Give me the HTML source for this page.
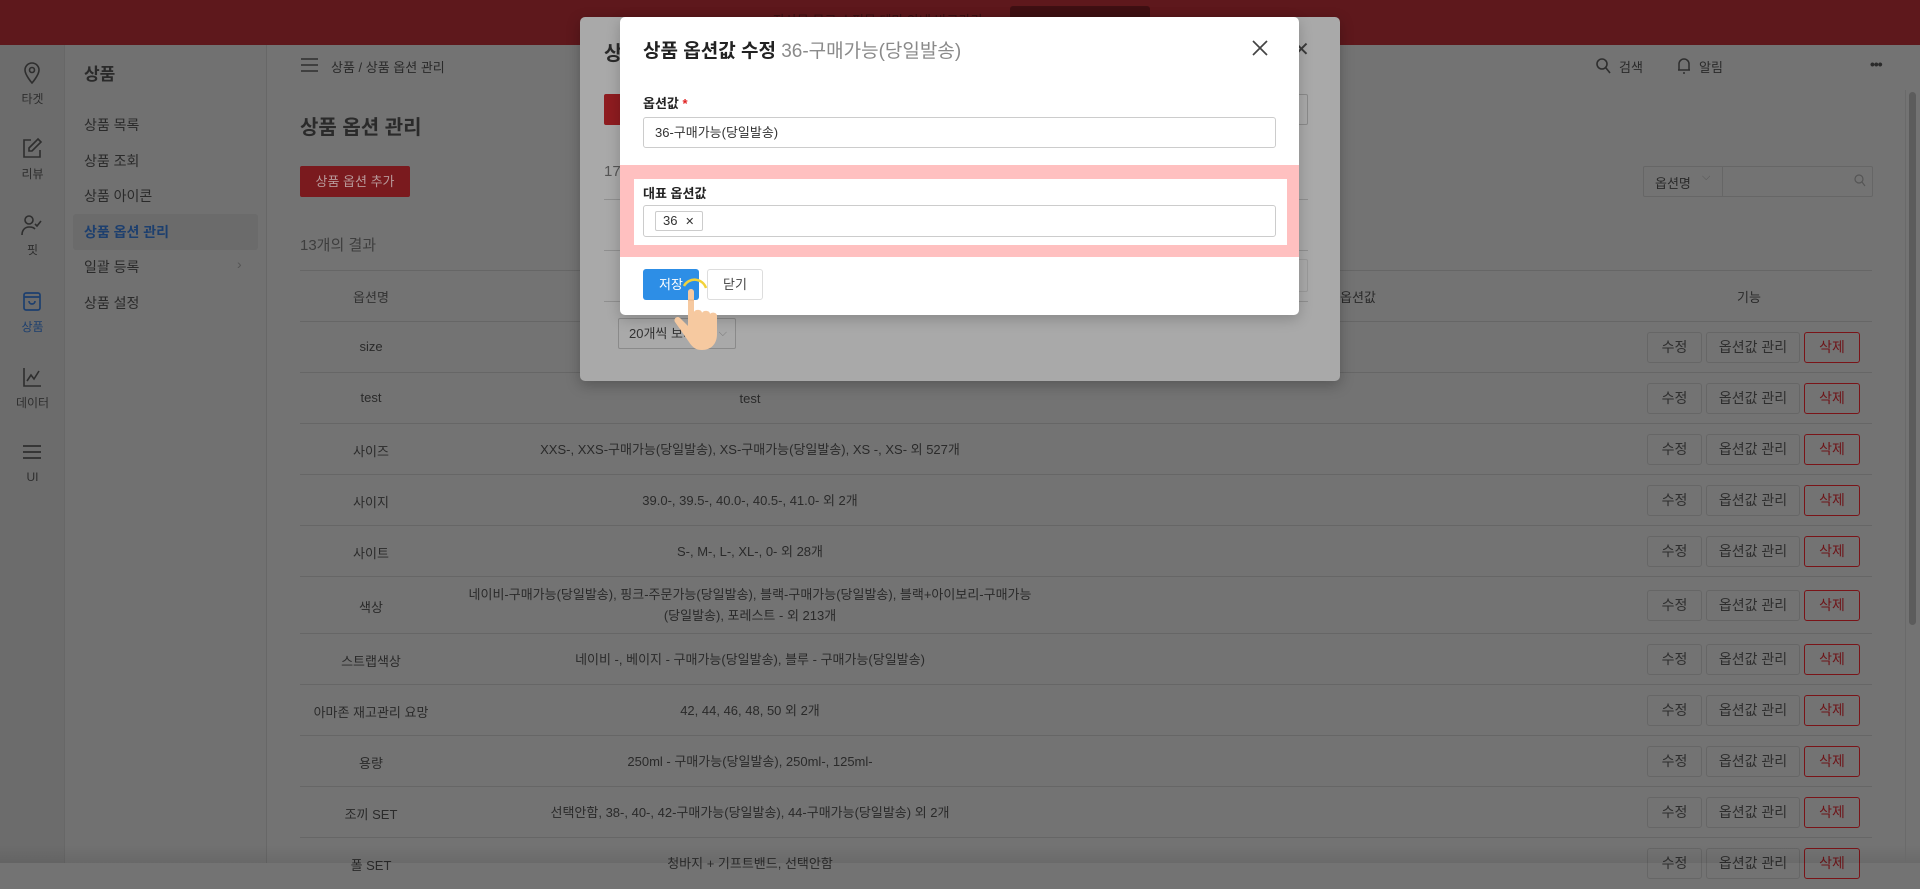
<!DOCTYPE html>
<html><head><meta charset="utf-8"><style>
*{box-sizing:border-box;margin:0;padding:0}
body{width:1920px;height:863px;overflow:hidden;position:relative;background:#737373;font-family:"Liberation Sans","Noto Sans CJK KR",sans-serif;color:#2a2a2a}
.a{position:absolute}
.hdr{left:0;top:0;width:1920px;height:45px;background:#5e181c}
.isb{left:0;top:45px;width:65px;height:818px;background:#6c6c6c;border-right:1px solid #676767}
.sub{left:65px;top:45px;width:202px;height:818px;background:#717171;border-right:1px solid #676767}
.ic{width:65px;text-align:center;font-size:12px;color:#2e2e2e}
.mi{left:84px;font-size:14px;color:#2a2a2a}
.row{left:300px;width:1572px;border-bottom:1px solid #666}
.c1{position:absolute;left:0;width:142px;text-align:center;font-size:13px;white-space:nowrap}
.c2{position:absolute;left:50px;width:800px;text-align:center;font-size:13px;line-height:21px;white-space:nowrap}
.b{position:absolute;height:31px;border:1px solid #666;border-radius:3px;font-size:14px;text-align:center;line-height:29px;color:#2e2e2e;background:#737373}
.b1{left:1347px;width:55px}.b2{left:1406px;width:94px}.b3{left:1504px;width:56px;border-color:#7a1418;color:#6e1418}
</style></head><body>
<div class="a hdr"></div>
<div class="a" style="left:773px;top:10px;font-size:13px;color:#3a1013">자사몰 무료 쇼핑몰 테마 안내 바로가기</div>
<div class="a" style="left:1010px;top:6px;width:140px;height:24px;background:#3f1013;border-radius:3px"></div>

<div class="a isb"></div>
<div class="a sub"></div>
<svg class="a" style="left:22px;top:62px" width="20" height="22" viewBox="0 0 20 22" fill="none" stroke="#2e2e2e" stroke-width="1.6"><path d="M10 21C10 21 3 13 3 8a7 7 0 0114 0c0 5-7 13-7 13z"/><circle cx="10" cy="8" r="2.5"/></svg>
<div class="a ic" style="top:90px">타겟</div>
<svg class="a" style="left:21px;top:137px" width="22" height="22" viewBox="0 0 22 22" fill="none" stroke="#2e2e2e" stroke-width="1.6"><path d="M10 3H3v17h16v-7"/><path d="M17 2l3 3-9 9H8v-3z"/></svg>
<div class="a ic" style="top:165px">리뷰</div>
<svg class="a" style="left:20px;top:214px" width="24" height="22" viewBox="0 0 24 22" fill="none" stroke="#2e2e2e" stroke-width="1.6"><circle cx="9" cy="6" r="4"/><path d="M2 21c0-5 3-8 7-8s5 1 6 2"/><path d="M15 10l2 2 4-5"/></svg>
<div class="a ic" style="top:241px">핏</div>
<svg class="a" style="left:21px;top:290px" width="22" height="22" viewBox="0 0 22 22" fill="none" stroke="#1d3f6e" stroke-width="1.7"><rect x="3" y="3" width="16" height="17" rx="2"/><path d="M3 7h16M8 11c0 4 6 4 6 0"/></svg>
<div class="a ic" style="top:318px;color:#1d3f6e">상품</div>
<svg class="a" style="left:21px;top:366px" width="22" height="22" viewBox="0 0 22 22" fill="none" stroke="#2e2e2e" stroke-width="1.6"><path d="M3 2v18h17"/><path d="M6 15l4-6 3 4 5-8"/></svg>
<div class="a ic" style="top:394px">데이터</div>
<svg class="a" style="left:21px;top:443px" width="22" height="18" viewBox="0 0 22 18" fill="none" stroke="#2e2e2e" stroke-width="1.8"><path d="M2 3h18M2 9h18M2 15h18"/></svg>
<div class="a ic" style="top:470px">UI</div>

<div class="a" style="left:84px;top:60px;font-size:17px;font-weight:bold">상품</div>
<div class="a mi" style="top:115px">상품 목록</div>
<div class="a mi" style="top:151px">상품 조회</div>
<div class="a mi" style="top:186px">상품 아이콘</div>
<div class="a" style="left:73px;top:214px;width:185px;height:36px;background:#6b6b6b;border-radius:3px"></div>
<div class="a mi" style="top:222px;color:#1d3f6e;font-weight:bold">상품 옵션 관리</div>
<div class="a mi" style="top:257px">일괄 등록</div>
<div class="a" style="left:237px;top:256px;font-size:14px;color:#555">›</div>
<div class="a mi" style="top:293px">상품 설정</div>

<svg class="a" style="left:301px;top:58px" width="17" height="14" viewBox="0 0 17 14" stroke="#2e2e2e" stroke-width="1.6"><path d="M0 1h17M0 7h17M0 13h17"/></svg>
<div class="a" style="left:331px;top:57px;font-size:13px">상품 / 상품 옵션 관리</div>
<svg class="a" style="left:1596px;top:58px" width="15" height="16" viewBox="0 0 15 16" fill="none" stroke="#2e2e2e" stroke-width="1.6"><circle cx="6" cy="6" r="5"/><path d="M10 10l4 5"/></svg>
<div class="a" style="left:1619px;top:57px;font-size:13px">검색</div>
<svg class="a" style="left:1677px;top:57px" width="14" height="17" viewBox="0 0 14 17" fill="none" stroke="#2e2e2e" stroke-width="1.5"><path d="M2 13V7a5 5 0 0110 0v6H1h12M6 16h2"/></svg>
<div class="a" style="left:1699px;top:57px;font-size:13px">알림</div>
<div class="a" style="left:1870px;top:56px;font-size:14px;font-weight:bold;letter-spacing:-1px">•••</div>

<div class="a" style="left:300px;top:111px;font-size:20px;font-weight:bold">상품 옵션 관리</div>
<div class="a" style="left:300px;top:166px;width:110px;height:31px;background:#7a1a1e;border-radius:2px;color:#b89a9b;font-size:13px;text-align:center;line-height:31px">상품 옵션 추가</div>
<div class="a" style="left:300px;top:234px;font-size:15px;color:#3e3e3e">13개의 결과</div>
<div class="a" style="left:1643px;top:166px;width:230px;height:31px;border:1px solid #666;border-radius:2px"></div>
<div class="a" style="left:1722px;top:166px;width:1px;height:31px;background:#666"></div>
<div class="a" style="left:1655px;top:173px;font-size:13px">옵션명</div>
<div class="a" style="left:1702px;top:171px;font-size:11px;color:#555">⌵</div>
<svg class="a" style="left:1854px;top:174px" width="12" height="13" viewBox="0 0 12 13" fill="none" stroke="#555" stroke-width="1.2"><circle cx="5" cy="5" r="4"/><path d="M8 8l3 4"/></svg>

<div class="a" style="left:300px;top:270px;width:1572px;height:1px;background:#666"></div>
<div class="a row" style="top:271px;height:51px"><div class="c1" style="top:16px;color:#333">옵션명</div><div class="a" style="left:1040px;top:16px;font-size:13px">옵션값</div><div class="a" style="left:1437px;top:16px;font-size:13px">기능</div></div>

<div class="a row" style="top:322px;height:51px"><div class="c1" style="top:17px">size</div><div class="b b1" style="top:10px">수정</div><div class="b b2" style="top:10px">옵션값 관리</div><div class="b b3" style="top:10px">삭제</div></div>
<div class="a row" style="top:373px;height:51px"><div class="c1" style="top:17px">test</div><div class="c2" style="top:15px">test</div><div class="b b1" style="top:10px">수정</div><div class="b b2" style="top:10px">옵션값 관리</div><div class="b b3" style="top:10px">삭제</div></div>
<div class="a row" style="top:424px;height:51px"><div class="c1" style="top:17px">사이즈</div><div class="c2" style="top:15px">XXS-, XXS-구매가능(당일발송), XS-구매가능(당일발송), XS -, XS- 외 527개</div><div class="b b1" style="top:10px">수정</div><div class="b b2" style="top:10px">옵션값 관리</div><div class="b b3" style="top:10px">삭제</div></div>
<div class="a row" style="top:475px;height:51px"><div class="c1" style="top:17px">사이지</div><div class="c2" style="top:15px">39.0-, 39.5-, 40.0-, 40.5-, 41.0- 외 2개</div><div class="b b1" style="top:10px">수정</div><div class="b b2" style="top:10px">옵션값 관리</div><div class="b b3" style="top:10px">삭제</div></div>
<div class="a row" style="top:526px;height:51px"><div class="c1" style="top:17px">사이트</div><div class="c2" style="top:15px">S-, M-, L-, XL-, 0- 외 28개</div><div class="b b1" style="top:10px">수정</div><div class="b b2" style="top:10px">옵션값 관리</div><div class="b b3" style="top:10px">삭제</div></div>
<div class="a row" style="top:577px;height:57px"><div class="c1" style="top:20px">색상</div><div class="c2" style="top:7px">네이비-구매가능(당일발송), 핑크-주문가능(당일발송), 블랙-구매가능(당일발송), 블랙+아이보리-구매가능<br>(당일발송), 포레스트 - 외 213개</div><div class="b b1" style="top:13px">수정</div><div class="b b2" style="top:13px">옵션값 관리</div><div class="b b3" style="top:13px">삭제</div></div>
<div class="a row" style="top:634px;height:51px"><div class="c1" style="top:17px">스트랩색상</div><div class="c2" style="top:15px">네이비 -, 베이지 - 구매가능(당일발송), 블루 - 구매가능(당일발송)</div><div class="b b1" style="top:10px">수정</div><div class="b b2" style="top:10px">옵션값 관리</div><div class="b b3" style="top:10px">삭제</div></div>
<div class="a row" style="top:685px;height:51px"><div class="c1" style="top:17px">아마존 재고관리 요망</div><div class="c2" style="top:15px">42, 44, 46, 48, 50 외 2개</div><div class="b b1" style="top:10px">수정</div><div class="b b2" style="top:10px">옵션값 관리</div><div class="b b3" style="top:10px">삭제</div></div>
<div class="a row" style="top:736px;height:51px"><div class="c1" style="top:17px">용량</div><div class="c2" style="top:15px">250ml - 구매가능(당일발송), 250ml-, 125ml-</div><div class="b b1" style="top:10px">수정</div><div class="b b2" style="top:10px">옵션값 관리</div><div class="b b3" style="top:10px">삭제</div></div>
<div class="a row" style="top:787px;height:51px"><div class="c1" style="top:17px">조끼 SET</div><div class="c2" style="top:15px">선택안함, 38-, 40-, 42-구매가능(당일발송), 44-구매가능(당일발송) 외 2개</div><div class="b b1" style="top:10px">수정</div><div class="b b2" style="top:10px">옵션값 관리</div><div class="b b3" style="top:10px">삭제</div></div>
<div class="a row" style="top:838px;height:51px;border:none"><div class="c1" style="top:17px">폴 SET</div><div class="c2" style="top:15px">청바지 + 기프트밴드, 선택안함</div><div class="b b1" style="top:10px">수정</div><div class="b b2" style="top:10px">옵션값 관리</div><div class="b b3" style="top:10px">삭제</div></div>
<div class="a" style="left:0;top:845px;width:1920px;height:18px;background:linear-gradient(rgba(0,0,0,0),rgba(0,0,0,0.08))"></div>
<div class="a" style="left:1905px;top:90px;width:1px;height:773px;background:#6a6a6a"></div>
<div class="a" style="left:1909px;top:92px;width:7px;height:533px;background:#5c5c5c;border-radius:4px"></div>

<div class="a" style="left:580px;top:17px;width:760px;height:364px;background:#a9a9a9;border-radius:5px;box-shadow:0 4px 14px rgba(0,0,0,.25)">
  <div class="a" style="left:24px;top:20px;font-size:20px;font-weight:bold;color:#2a2a2a">상</div>
  <div class="a" style="left:713px;top:20px;font-size:20px;color:#3a3a3a">✕</div>
  <div class="a" style="left:24px;top:77px;width:40px;height:31px;background:#8e1c20;border-radius:2px"></div>
  <div class="a" style="left:690px;top:77px;width:38px;height:31px;border:1px solid #8a8a8a;border-radius:2px"></div>
  <div class="a" style="left:24px;top:146px;font-size:15px;color:#555">17</div>
  <div class="a" style="left:24px;top:182px;width:704px;height:1px;background:#8f8f8f"></div>
  <div class="a" style="left:24px;top:233px;width:704px;height:1px;background:#8f8f8f"></div>
  <div class="a" style="left:24px;top:284px;width:704px;height:1px;background:#8f8f8f"></div>
  <div class="a" style="left:690px;top:242px;width:38px;height:33px;border:1px solid #999;border-radius:2px"></div>
  <div class="a" style="left:38px;top:301px;width:118px;height:31px;border:1px solid #8a8a8a;border-radius:2px;font-size:13px;line-height:29px;padding-left:10px;color:#333">20개씩 보기 <span style="float:right;margin-right:8px;color:#777;font-size:11px">⌵</span></div>
</div>

<div class="a" style="left:620px;top:17px;width:679px;height:298px;background:#fff;border-radius:5px;box-shadow:0 4px 14px rgba(0,0,0,.2)">
  <div class="a" style="left:23px;top:19px;font-size:19px;font-weight:bold;color:#222;white-space:nowrap">상품 옵션값 수정 <span style="font-weight:normal;color:#8a8a8a">36-구매가능(당일발송)</span></div>
  <svg class="a" style="left:632px;top:23px" width="16" height="16" viewBox="0 0 16 16" stroke="#444" stroke-width="1.7"><path d="M1 1l14 14M15 1L1 15"/></svg>
  <div class="a" style="left:23px;top:76px;font-size:13px;font-weight:bold;color:#222">옵션값 <span style="color:#e02020">*</span></div>
  <div class="a" style="left:23px;top:100px;width:633px;height:31px;border:1px solid #ccc;border-radius:3px;font-size:13px;line-height:29px;padding-left:11px;color:#333">36-구매가능(당일발송)</div>
  <div class="a" style="left:0;top:148px;width:679px;height:92px;background:#ffc0c0"></div>
  <div class="a" style="left:14px;top:162px;width:653px;height:66px;background:#fff"></div>
  <div class="a" style="left:23px;top:166px;font-size:13px;font-weight:bold;color:#222">대표 옵션값</div>
  <div class="a" style="left:23px;top:188px;width:633px;height:32px;border:1px solid #ccc;border-radius:3px"></div>
  <div class="a" style="left:35px;top:194px;width:48px;height:20px;border:1px solid #ccc;border-radius:2px;font-size:13px;line-height:18px;padding-left:7px;color:#333">36 <span style="font-size:11px;margin-left:4px">✕</span></div>
  <div class="a" style="left:23px;top:252px;width:56px;height:31px;background:#2d8ee6;border-radius:3px;color:#fff;font-size:13px;text-align:center;line-height:31px">저장</div>
  <div class="a" style="left:87px;top:252px;width:56px;height:31px;border:1px solid #ddd;border-radius:3px;color:#444;font-size:13px;text-align:center;line-height:29px">닫기</div>
</div>
<svg class="a" style="left:666px;top:272px" width="62" height="80" viewBox="0 0 62 80">
  <path d="M18 14 A12 12 0 0 1 40 16" fill="none" stroke="#f2d23a" stroke-width="2.5"/>
  <path d="M22 20c0-4 6-4 6 0v20c1-3 8-3 8 1 1-3 8-3 8 1 1-2 7-2 7 2v18c0 10-6 16-15 16-6 0-9-2-13-8L9 50c-2-3 2-7 5-4l8 8z" fill="#f6c9a0"/>
  <path d="M22 28h6" stroke="#e8b58a" stroke-width="1"/>
</svg>
</body></html>
